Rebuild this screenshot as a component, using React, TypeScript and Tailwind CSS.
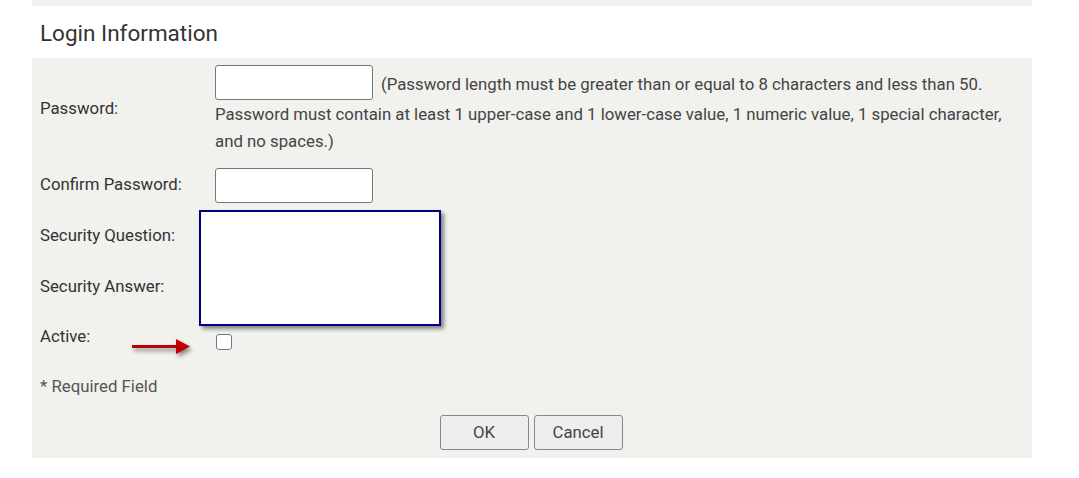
import React from "react";

const font = { fontFamily: "Roboto, 'Noto Sans', sans-serif" };

export default function App() {
  return (
    <div className="w-[1079px] h-[478px] bg-white text-[#333]" style={font}>
      <div className="ml-8 w-[1000px] h-[6px] bg-[#f1f1ed]" />
      <h2 className="ml-10 h-[52px] pt-[3px] flex items-center text-[22.5px] leading-none text-[#333]">
        Login Information
      </h2>

      <div className="relative ml-8 w-[1000px] h-[400px] bg-[#f1f1ed] pl-2 text-[16.8px]">
        {/* Password */}
        <div className="grid grid-cols-[175px_1fr] h-[102px]">
          <div className="flex items-center">Password:</div>
          <div className="pt-[7px] leading-[30px] text-[#444]">
            <div className="flex items-center gap-2 h-[35px]">
              <input type="password" className="w-[158px] h-[35px] bg-white border border-[#777] rounded-[3px]" />
              <span className="pt-[3px]">(Password length must be greater than or equal to 8 characters and less than 50.</span>
            </div>
            <div className="-mt-[1px]">Password must contain at least 1 upper-case and 1 lower-case value, 1 numeric value, 1 special character,</div>
            <div className="-mt-[3px]">and no spaces.)</div>
          </div>
        </div>

        {/* Confirm */}
        <div className="grid grid-cols-[175px_1fr] h-[50px] items-center">
          <div>Confirm Password:</div>
          <input type="password" className="w-[158px] h-[35px] bg-white border border-[#777] rounded-[3px]" />
        </div>

        <div className="grid grid-cols-[175px_1fr] h-[52px] items-center">
          <div>Security Question:</div>
          <div />
        </div>
        <div className="grid grid-cols-[175px_1fr] h-[50px] items-center">
          <div>Security Answer:</div>
          <div />
        </div>

        {/* Active */}
        <div className="relative grid grid-cols-[175px_1fr] h-[50px] items-center">
          <div>Active:</div>
          <div className="pt-[10px]">
            <div className="ml-px w-4 h-4 bg-white border border-[#777] rounded-[3px]" />
          </div>
          <svg
            className="absolute left-[92px] top-[27px] drop-shadow-[2px_3px_2px_rgba(0,0,0,0.45)]"
            width="62"
            height="18"
            viewBox="0 0 62 18"
          >
            <rect x="0" y="6" width="46" height="3" fill="#c00000" />
            <polygon points="44,0 58,7.5 44,15" fill="#c00000" />
          </svg>
        </div>

        <div className="h-[50px] flex items-center text-[#555]">* Required Field</div>

        <div className="flex justify-center gap-[5px] pt-[3px] pr-[10px]">
          <button className="w-[89px] h-[35px] bg-[#eeeeee] border border-[#888] rounded-[3px] text-[#444]">OK</button>
          <button className="w-[89px] h-[35px] bg-[#eeeeee] border border-[#888] rounded-[3px] text-[#444]">Cancel</button>
        </div>

        {/* overlay box */}
        <div className="absolute left-[167px] top-[152px] w-[242px] h-[116px] bg-white border-2 border-[#000080] shadow-[3px_3px_4px_rgba(0,0,0,0.45)]" />
      </div>
    </div>
  );
}
